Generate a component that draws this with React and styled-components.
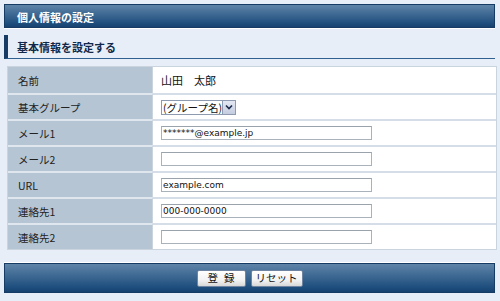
import React from "react";
import styled, { createGlobalStyle } from "styled-components";

const GlobalStyle = createGlobalStyle`
  body {
    margin: 0;
    background: #e8eef7;
    font-family: "DejaVu Sans", "Noto Sans CJK JP", sans-serif;
  }
`;

const Page = styled.div`
  width: 491px;
  padding: 4px 5px 0 4px;
  background: #e8eef7;
`;

const Bar = styled.div`
  box-sizing: border-box;
  height: ${({ tall }) => (tall ? "30px" : "24px")};
  border: 1px solid #163c66;
  background: linear-gradient(#5f84a8, #1d4d7d 85%, #17426f);
  box-shadow: 0 1px 0 #ffffff, 0 -1px 0 ${({ tall }) => (tall ? "#ffffff" : "transparent")};
  display: flex;
  align-items: center;
  justify-content: ${({ tall }) => (tall ? "center" : "flex-start")};
  gap: 5px;
  padding-left: ${({ tall }) => (tall ? "0" : "12px")};
  padding-top: ${({ tall }) => (tall ? "0" : "1px")};
  color: #ffffff;
  font-family: "Noto Sans CJK JP", sans-serif;
  font-size: 11px;
  font-weight: 700;
  margin-top: ${({ tall }) => (tall ? "13px" : "0")};
`;

const SectionTitle = styled.div`
  box-sizing: border-box;
  margin-top: 7px;
  height: 24px;
  border-left: 4px solid #163c66;
  border-bottom: 1px solid #30608f;
  padding-left: 9px;
  display: flex;
  align-items: center;
  color: #10294a;
  font-family: "Noto Sans CJK JP", sans-serif;
  font-size: 11px;
  font-weight: 700;
`;

const FormTable = styled.div`
  margin: 7px 0 0 3px;
  width: 488px;
  border: 1px solid #c9d4df;
  background: #ffffff;
  display: grid;
  grid-template-columns: 145px 1fr;
`;

const Label = styled.div`
  box-sizing: border-box;
  height: 26px;
  background: #b6c5d3;
  border-top: ${({ first }) => (first ? "none" : "2px solid #dfe6ee")};
  border-right: 1px solid #c9d4df;
  padding-left: 10px;
  display: flex;
  align-items: center;
  color: #222;
  font-family: "Noto Sans CJK JP", sans-serif;
  font-size: 10.5px;
`;

const Value = styled.div`
  box-sizing: border-box;
  height: 26px;
  border-top: ${({ first }) => (first ? "none" : "2px solid #d5dee8")};
  padding-left: 8px;
  display: flex;
  align-items: center;
  color: #111;
  font-family: "Noto Sans CJK JP", sans-serif;
  font-size: 11px;
`;

const TextInput = styled.input`
  box-sizing: border-box;
  width: 211px;
  height: 14px;
  border: 1px solid #a9b1ba;
  border-top-color: #9aa2ab;
  padding: 0 1px;
  font-family: "DejaVu Sans", "Noto Sans CJK JP", sans-serif;
  font-size: 9px;
  color: #111;
  background: #fff;
  outline: none;
`;

const SelectBox = styled.div`
  box-sizing: border-box;
  height: 15px;
  width: 75px;
  border: 1px solid #8e9ab0;
  display: flex;
  align-items: stretch;
  background: #fff;
  font-size: 10.5px;
`;

const SelectText = styled.span`
  flex: 1;
  display: flex;
  align-items: center;
  padding-left: 1px;
  white-space: nowrap;
`;

const SelectArrow = styled.span`
  width: 13px;
  border-left: 1px solid #8e9ab0;
  background: linear-gradient(#e4e8f2, #c4cce0);
  display: flex;
  align-items: center;
  justify-content: center;
`;

const Button = styled.button`
  box-sizing: border-box;
  height: 17px;
  min-width: ${({ wide }) => (wide ? "48px" : "43px")};
  padding: 0 4px;
  border: 1px solid #6e84a0;
  border-radius: 2px;
  background: linear-gradient(#ffffff, #f3f3f3 60%, #d8d8d8);
  color: #111;
  font-family: "Noto Sans CJK JP", sans-serif;
  font-size: 10.5px;
  line-height: 1;
  letter-spacing: ${({ wide }) => (wide ? "6px" : "0")};
  text-indent: ${({ wide }) => (wide ? "6px" : "0")};
`;

const rows = [
  { label: "名前", text: "山田　太郎" },
  { label: "基本グループ", select: "(グループ名)" },
  { label: "メール1", input: "*******@example.jp" },
  { label: "メール2", input: "" },
  { label: "URL", input: "example.com" },
  { label: "連絡先1", input: "000-000-0000" },
  { label: "連絡先2", input: "" },
];

export default function App() {
  return (
    <Page>
      <GlobalStyle />
      <Bar>個人情報の設定</Bar>
      <SectionTitle>基本情報を設定する</SectionTitle>
      <FormTable>
        {rows.map((row, i) => (
          <React.Fragment key={row.label}>
            <Label first={i === 0}>{row.label}</Label>
            <Value first={i === 0}>
              {row.text && row.text}
              {row.select && (
                <SelectBox>
                  <SelectText>{row.select}</SelectText>
                  <SelectArrow>
                    <svg width="8" height="6" viewBox="0 0 8 6">
                      <path d="M1 1.5 L4 4.5 L7 1.5" fill="none" stroke="#1a2a4a" strokeWidth="1.6" />
                    </svg>
                  </SelectArrow>
                </SelectBox>
              )}
              {row.input !== undefined && <TextInput defaultValue={row.input} />}
            </Value>
          </React.Fragment>
        ))}
      </FormTable>
      <Bar tall>
        <Button wide>登録</Button>
        <Button>リセット</Button>
      </Bar>
    </Page>
  );
}
